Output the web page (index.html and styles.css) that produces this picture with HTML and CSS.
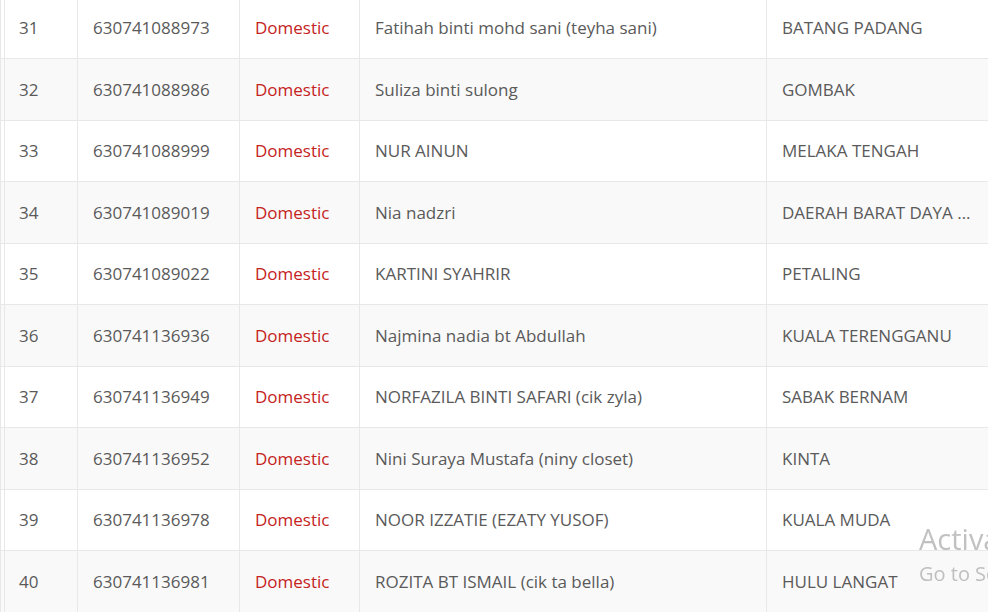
FILE: index.html
```html
<!DOCTYPE html>
<html lang="en">
<head>
    <meta charset="UTF-8">
    <meta name="viewport" content="width=device-width, initial-scale=1.0">
    <title>Customers</title>
    <link rel="stylesheet" href="styles.css">
</head>
<body>
    <main class="table-wrap">
        <table class="data-table">
            <colgroup>
                <col class="col-check">
                <col class="col-no">
                <col class="col-id">
                <col class="col-type">
                <col class="col-name">
                <col class="col-area">
            </colgroup>
            <tbody>
                <tr><td></td><td>31</td><td>630741088973</td><td class="type">Domestic</td><td>Fatihah binti mohd sani (teyha sani)</td><td class="area">BATANG PADANG</td></tr>
                <tr><td></td><td>32</td><td>630741088986</td><td class="type">Domestic</td><td>Suliza binti sulong</td><td class="area">GOMBAK</td></tr>
                <tr><td></td><td>33</td><td>630741088999</td><td class="type">Domestic</td><td>NUR AINUN</td><td class="area">MELAKA TENGAH</td></tr>
                <tr><td></td><td>34</td><td>630741089019</td><td class="type">Domestic</td><td>Nia nadzri</td><td class="area">DAERAH BARAT DAYA (PULAU PINANG)</td></tr>
                <tr><td></td><td>35</td><td>630741089022</td><td class="type">Domestic</td><td>KARTINI SYAHRIR</td><td class="area">PETALING</td></tr>
                <tr><td></td><td>36</td><td>630741136936</td><td class="type">Domestic</td><td>Najmina nadia bt Abdullah</td><td class="area">KUALA TERENGGANU</td></tr>
                <tr><td></td><td>37</td><td>630741136949</td><td class="type">Domestic</td><td>NORFAZILA BINTI SAFARI (cik zyla)</td><td class="area">SABAK BERNAM</td></tr>
                <tr><td></td><td>38</td><td>630741136952</td><td class="type">Domestic</td><td>Nini Suraya Mustafa (niny closet)</td><td class="area">KINTA</td></tr>
                <tr><td></td><td>39</td><td>630741136978</td><td class="type">Domestic</td><td>NOOR IZZATIE (EZATY YUSOF)</td><td class="area">KUALA MUDA</td></tr>
                <tr><td></td><td>40</td><td>630741136981</td><td class="type">Domestic</td><td>ROZITA BT ISMAIL (cik ta bella)</td><td class="area">HULU LANGAT</td></tr>
            </tbody>
        </table>
    </main>

    <div class="watermark">
        <div class="wm-title">Activate Windows</div>
        <div class="wm-sub">Go to Settings to activate Windows.</div>
    </div>
</body>
</html>
```

FILE: styles.css
```css
:root {
    --text: #5a5a5a;
    --red: #c52222;
    --line: #e8e8e8;
    --stripe: #f9f9f9;
}

* {
    box-sizing: border-box;
    margin: 0;
}

body {
    font-family: "Open Sans", "Noto Sans", sans-serif;
    color: var(--text);
    background: white;
    overflow: hidden;
}

/* table */
.table-wrap {
    width: 988px;
    height: 612px;
    overflow: hidden;
}

.data-table {
    margin-top: -3px;
    width: 990px;
    border-collapse: collapse;
    table-layout: fixed;
    font-size: 17px;
}

.col-check { width: 4px; }
.col-no { width: 73px; }
.col-id { width: 162px; }
.col-type { width: 120px; }
.col-name { width: 407px; }
.col-area { width: 224px; }

.data-table td {
    height: 61.5px;
    padding: 0 16px 0 14px;
    border: 1px solid var(--line);
    border-top: none;
    vertical-align: middle;
    white-space: nowrap;
    overflow: hidden;
    text-overflow: ellipsis;
}

.data-table td:first-child {
    padding: 0;
}

.data-table td:nth-child(n+3) {
    padding-left: 15px;
}

.data-table tr:nth-child(even) td {
    background: var(--stripe);
}

.data-table .type {
    color: var(--red);
}

/* windows watermark */
.watermark {
    position: fixed;
    left: 919px;
    top: 520px;
    color: rgba(160, 160, 160, 0.65);
    white-space: nowrap;
    pointer-events: none;
}

.wm-title {
    font-size: 29px;
    line-height: 38px;
}

.wm-sub {
    font-size: 20px;
    line-height: 32px;
}
```
